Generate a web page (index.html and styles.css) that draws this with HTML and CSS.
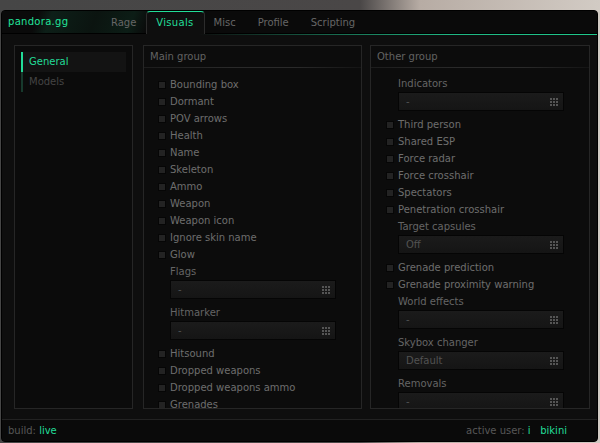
FILE: index.html
```html
<!DOCTYPE html>
<html lang="en">
<head>
    <meta charset="UTF-8">
    <title>pandora.gg</title>
    <link rel="stylesheet" href="styles.css">
</head>
<body>
    <div class="window">
        <div class="header">
            <div class="brand">pandora.gg</div>
            <div class="tabs">
                <span class="tab">Rage</span>
                <span class="tab active">Visuals</span>
                <span class="tab">Misc</span>
                <span class="tab">Profile</span>
                <span class="tab">Scripting</span>
            </div>
        </div>
        <div class="accent"></div>

        <div class="content">
            <div class="sidebar">
                <div class="side-item active">General</div>
                <div class="side-item">Models</div>
            </div>

            <div class="group">
                <div class="group-title">Main group</div>
                <div class="group-body main-body">
                    <div class="check"><span class="box"></span>Bounding box</div>
                    <div class="check"><span class="box"></span>Dormant</div>
                    <div class="check"><span class="box"></span>POV arrows</div>
                    <div class="check"><span class="box"></span>Health</div>
                    <div class="check"><span class="box"></span>Name</div>
                    <div class="check"><span class="box"></span>Skeleton</div>
                    <div class="check"><span class="box"></span>Ammo</div>
                    <div class="check"><span class="box"></span>Weapon</div>
                    <div class="check"><span class="box"></span>Weapon icon</div>
                    <div class="check"><span class="box"></span>Ignore skin name</div>
                    <div class="check"><span class="box"></span>Glow</div>
                    <div class="label">Flags</div>
                    <div class="select"><span>-</span>
                        <svg class="dots" width="8" height="8" viewBox="0 0 8 8"><path d="M0 0h2v2H0zM3 0h2v2H3zM6 0h2v2H6zM0 3h2v2H0zM3 3h2v2H3zM6 3h2v2H6zM0 6h2v2H0zM3 6h2v2H3zM6 6h2v2H6z"/></svg>
                    </div>
                    <div class="label">Hitmarker</div>
                    <div class="select"><span>-</span>
                        <svg class="dots" width="8" height="8" viewBox="0 0 8 8"><path d="M0 0h2v2H0zM3 0h2v2H3zM6 0h2v2H6zM0 3h2v2H0zM3 3h2v2H3zM6 3h2v2H6zM0 6h2v2H0zM3 6h2v2H3zM6 6h2v2H6z"/></svg>
                    </div>
                    <div class="check"><span class="box"></span>Hitsound</div>
                    <div class="check"><span class="box"></span>Dropped weapons</div>
                    <div class="check"><span class="box"></span>Dropped weapons ammo</div>
                    <div class="check"><span class="box"></span>Grenades</div>
                </div>
            </div>

            <div class="group">
                <div class="group-title">Other group</div>
                <div class="group-body other-body">
                    <div class="label">Indicators</div>
                    <div class="select"><span>-</span>
                        <svg class="dots" width="8" height="8" viewBox="0 0 8 8"><path d="M0 0h2v2H0zM3 0h2v2H3zM6 0h2v2H6zM0 3h2v2H0zM3 3h2v2H3zM6 3h2v2H6zM0 6h2v2H0zM3 6h2v2H3zM6 6h2v2H6z"/></svg>
                    </div>
                    <div class="check"><span class="box"></span>Third person</div>
                    <div class="check"><span class="box"></span>Shared ESP</div>
                    <div class="check"><span class="box"></span>Force radar</div>
                    <div class="check"><span class="box"></span>Force crosshair</div>
                    <div class="check"><span class="box"></span>Spectators</div>
                    <div class="check"><span class="box"></span>Penetration crosshair</div>
                    <div class="label">Target capsules</div>
                    <div class="select"><span>Off</span>
                        <svg class="dots" width="8" height="8" viewBox="0 0 8 8"><path d="M0 0h2v2H0zM3 0h2v2H3zM6 0h2v2H6zM0 3h2v2H0zM3 3h2v2H3zM6 3h2v2H6zM0 6h2v2H0zM3 6h2v2H3zM6 6h2v2H6z"/></svg>
                    </div>
                    <div class="check"><span class="box"></span>Grenade prediction</div>
                    <div class="check"><span class="box"></span>Grenade proximity warning</div>
                    <div class="label">World effects</div>
                    <div class="select"><span>-</span>
                        <svg class="dots" width="8" height="8" viewBox="0 0 8 8"><path d="M0 0h2v2H0zM3 0h2v2H3zM6 0h2v2H6zM0 3h2v2H0zM3 3h2v2H3zM6 3h2v2H6zM0 6h2v2H0zM3 6h2v2H3zM6 6h2v2H6z"/></svg>
                    </div>
                    <div class="label">Skybox changer</div>
                    <div class="select"><span>Default</span>
                        <svg class="dots" width="8" height="8" viewBox="0 0 8 8"><path d="M0 0h2v2H0zM3 0h2v2H3zM6 0h2v2H6zM0 3h2v2H0zM3 3h2v2H3zM6 3h2v2H6zM0 6h2v2H0zM3 6h2v2H3zM6 6h2v2H6z"/></svg>
                    </div>
                    <div class="label">Removals</div>
                    <div class="select"><span>-</span>
                        <svg class="dots" width="8" height="8" viewBox="0 0 8 8"><path d="M0 0h2v2H0zM3 0h2v2H3zM6 0h2v2H6zM0 3h2v2H0zM3 3h2v2H3zM6 3h2v2H6zM0 6h2v2H0zM3 6h2v2H3zM6 6h2v2H6z"/></svg>
                    </div>
                </div>
            </div>
        </div>

        <div class="footer">
            <div>build: <span class="green">live</span></div>
            <div>active user: <span class="green">i</span>&nbsp;&nbsp; <span class="green">bikini</span></div>
        </div>
    </div>
</body>
</html>
```

FILE: styles.css
```css
body {
    margin: 0;
    padding: 10px 2px 0 1px;
    font-family: "DejaVu Sans", sans-serif;
    font-size: 10px;
    color: #6e6e6e;
    background: linear-gradient(90deg, #464646 0%, #4a4747 60%, #b7aca4 70%, #d2cbc4 100%);
    height: 443px;
    box-sizing: border-box;
    overflow: hidden;
}

.window {
    height: 430px;
    background: #0e0e0e;
    border: 1px solid #000;
    border-radius: 4px;
    display: flex;
    flex-direction: column;
    overflow: hidden;
}

/* header with tabs */
.header {
    height: 22px;
    display: flex;
    align-items: flex-end;
    background: linear-gradient(110deg, #0a0a0a 0px, #0a0a0a 35px, #0d1f18 48px, #0b1410 90px, #0c1d16 125px, #0a0a0a 142px);
    border-bottom: 1px solid #000;
}

.brand {
    width: 99px;
    padding-left: 6px;
    box-sizing: border-box;
    color: #22e39a;
    line-height: 22px;
    letter-spacing: 0.3px;
}

.tabs {
    display: flex;
    align-items: flex-end;
    height: 22px;
}

.tab {
    padding: 0 10px;
    line-height: 21px;
    color: #666;
}

.tab:first-child { padding: 0 10px 0 10px; }
.tab:nth-child(3) { padding: 0 10px 0 9px; }
.tab:nth-child(4) { padding: 0 12px 0 12px; }
.tab:nth-child(5) { padding: 0 12px 0 10px; }

.tab.active {
    color: #22dc98;
    background: #0e0e0e;
    border: 1px solid #2c2c2c;
    border-top-color: #22dc98;
    border-bottom: none;
    border-radius: 4px 4px 0 0;
    margin-bottom: -1px;
    line-height: 22px;
    padding: 0 10px 0 9px;
    letter-spacing: 0.3px;
}

.accent {
    height: 1px;
    background: linear-gradient(90deg, transparent 0%, transparent 33%, #1fb683 75%, #1fc98c 100%);
}

/* main area */
.content {
    flex: 1;
    display: grid;
    grid-template-columns: 119px 219px 218px;
    column-gap: 10px;
    padding: 10px 10px 10px 12px;
    min-height: 0;
}

.content .group:last-child {
    margin-left: -2px;
}

.sidebar {
    background: #0b0b0b;
    border: 1px solid #262626;
    padding: 6px 6px 0 6px;
}

.side-item {
    height: 20px;
    line-height: 19px;
    padding-left: 6px;
    border-left: 2px solid #173a2d;
    color: #444;
}

.side-item.active {
    background: #131313;
    border-left-color: #22dc98;
    color: #22dc98;
}

.group {
    background: #0c0c0c;
    border: 1px solid #262626;
    display: flex;
    flex-direction: column;
    min-height: 0;
    overflow: hidden;
}

.group-title {
    height: 21px;
    line-height: 21px;
    padding-left: 6px;
    color: #626262;
    border-bottom: 1px solid;
    border-image: linear-gradient(90deg, #1c1c1c, #2a2a2a 40%, #2a2a2a 70%, #141414) 1;
}

.group-body {
    padding-top: 8px;
    overflow: hidden;
}

.main-body {
    padding-left: 14px;
}

.other-body {
    padding-left: 15px;
    padding-top: 7px;
}

.check {
    height: 17px;
    display: flex;
    align-items: center;
    white-space: nowrap;
}

.box {
    width: 6px;
    height: 6px;
    background: #232323;
    border: 1px solid #060606;
    margin-right: 4px;
    flex-shrink: 0;
}

.label {
    height: 17px;
    line-height: 17px;
    padding-left: 12px;
    color: #656565;
}

.select {
    margin: 0 0 5px 12px;
    width: 166px;
    height: 19px;
    box-sizing: border-box;
    border: 1px solid #050505;
    background: linear-gradient(180deg, #1b1b1b, #151515);
    display: flex;
    align-items: center;
    justify-content: space-between;
    padding: 0 5px 0 7px;
    color: #525252;
}

.dots {
    fill: #555;
}

.footer {
    height: 20px;
    border-top: 1px solid #222;
    background: #0a0a0a;
    display: flex;
    justify-content: space-between;
    align-items: center;
    padding: 0 30px 1px 6px;
    color: #575757;
}

.green {
    color: #22dc98;
}
```
